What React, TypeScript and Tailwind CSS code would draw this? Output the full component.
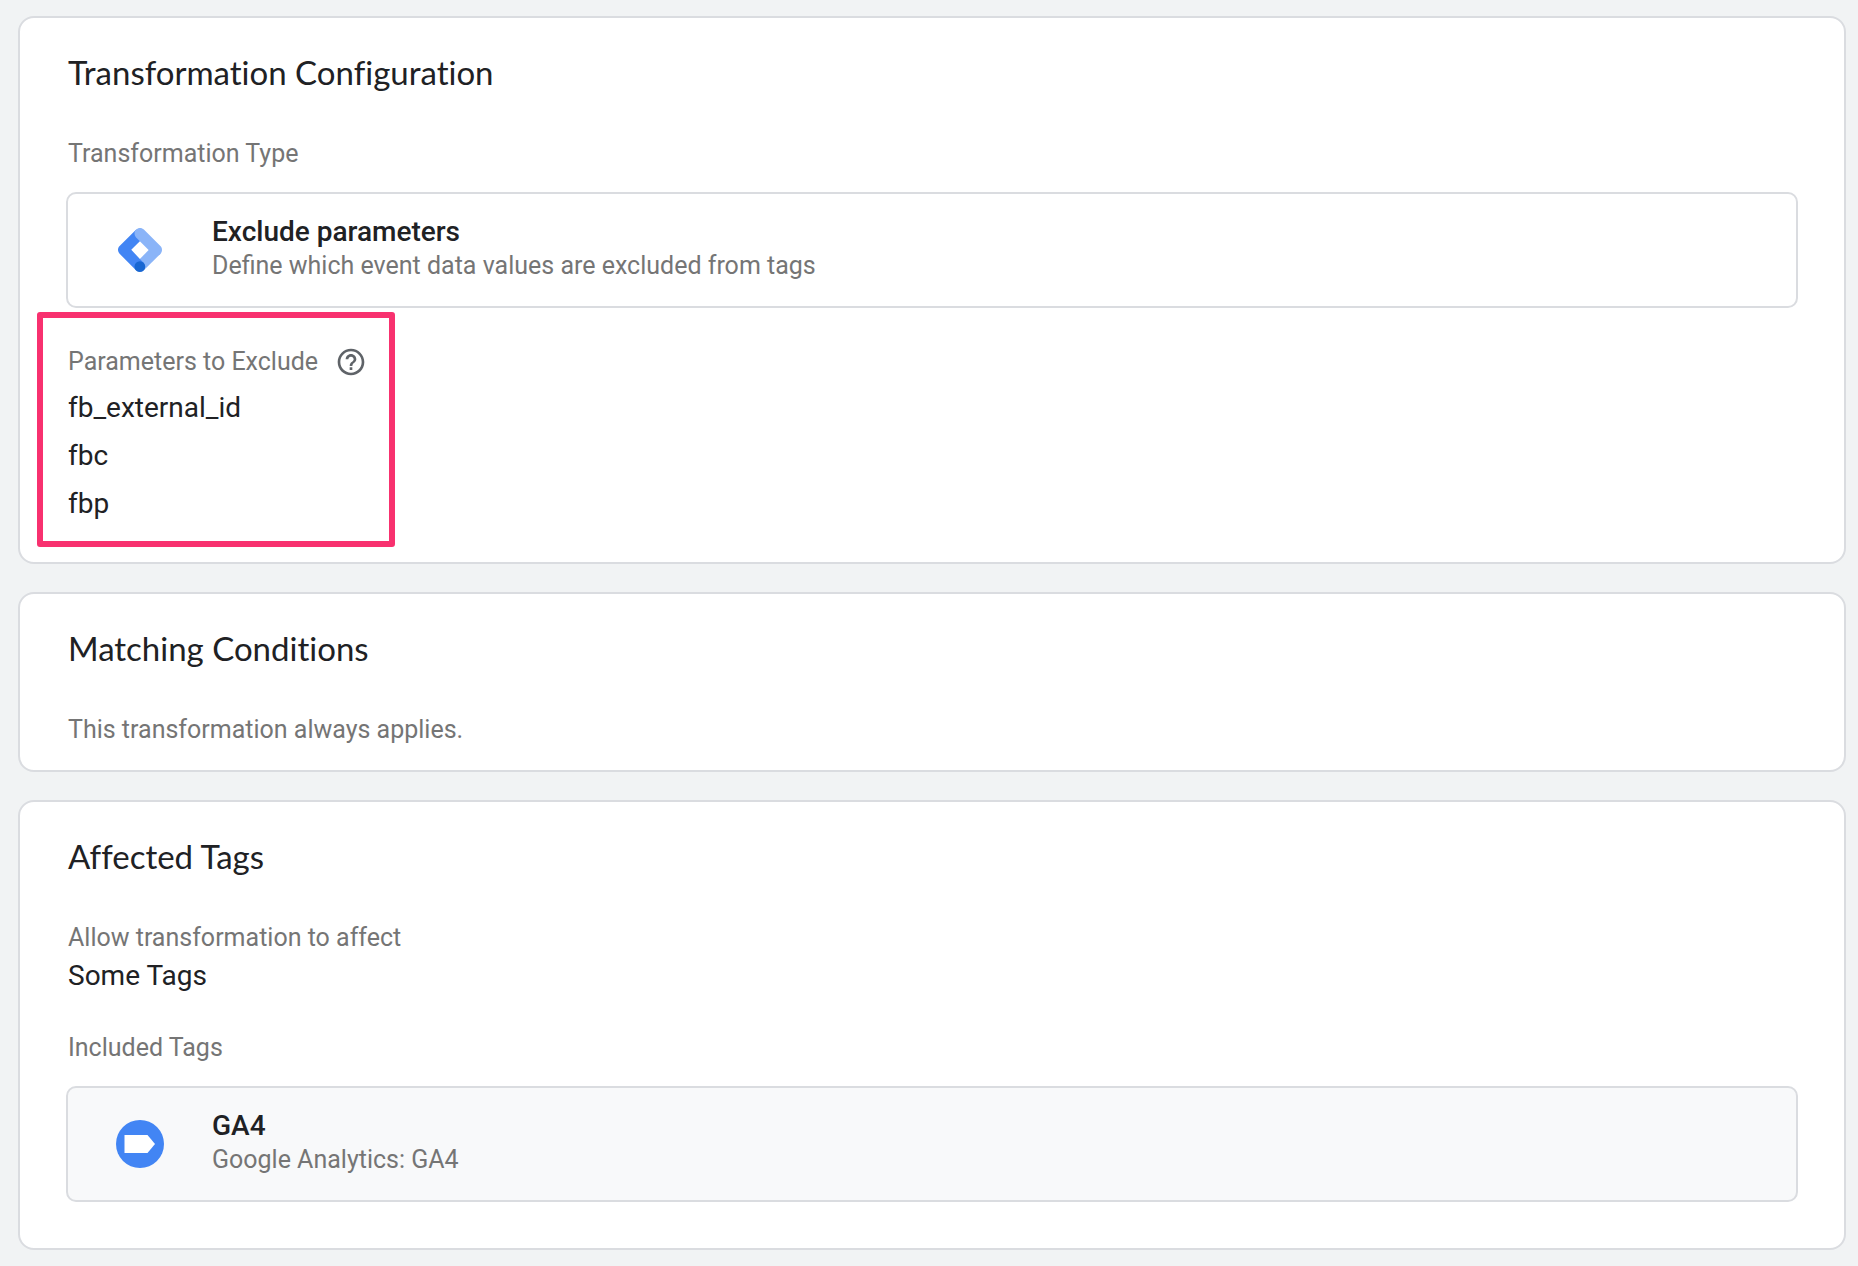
import type { ReactNode } from "react";
import { MdHelpOutline } from "react-icons/md";

const excludedParameters = ["fb_external_id", "fbc", "fbp"];

function TransformationIcon() {
  return (
    <svg viewBox="0 0 256 256" className="size-11" aria-hidden="true">
      <path fill="#8ab4f8" d="M150.26 245.52l-44.44-43.33 95.44-97.46 46 45.1z" />
      <path
        fill="#4285f4"
        d="M150.45 53.94L106.18 8.73 9.36 104.63c-12.48 12.48-12.48 32.71 0 45.2l95.36 95.99 45.09-42.18-72.65-76.41 73.29-73.29z"
      />
      <path
        fill="#8ab4f8"
        d="M246.63 105.37l-96-96c-12.5-12.5-32.76-12.5-45.25 0-12.5 12.49-12.5 32.75 0 45.25l96 96c12.49 12.49 32.75 12.49 45.25 0 12.49-12.5 12.49-32.76 0-45.25z"
      />
      <circle fill="#1967d2" cx="127.27" cy="224.73" r="31.27" />
    </svg>
  );
}

function TagIcon() {
  return (
    <svg viewBox="0 0 48 48" className="size-12" aria-hidden="true">
      <circle cx="24" cy="24" r="24" fill="#4285f4" />
      <path d="M8.5 15h23l7.5 9-7.5 9h-23z" fill="#fff" />
    </svg>
  );
}

function Card({ title, className, children }: { title: string; className: string; children: ReactNode }) {
  return (
    <section className={`rounded-2xl border-2 border-[#dadce0] bg-white px-[46px] pt-[34px] ${className}`}>
      <h2 className="mb-[46px] px-0.5 font-['Lato',sans-serif] text-[33px] leading-10 text-[#202124] [font-variant-ligatures:none]">
        {title}
      </h2>
      {children}
    </section>
  );
}

function Label({ children }: { children: ReactNode }) {
  return <p className="px-0.5 text-[25px] leading-8 text-[#757575]">{children}</p>;
}

function Row({ icon, title, text, className }: { icon: ReactNode; title: string; text: string; className: string }) {
  return (
    <div className={`mt-[22px] flex items-center gap-12 rounded-[10px] border-2 border-[#dadce0] px-12 ${className}`}>
      <div className="flex w-12 shrink-0 justify-center">{icon}</div>
      <div className="pt-5 pb-6">
        <h3 className="text-[28px] leading-9 font-medium text-[#202124]">{title}</h3>
        <p className="text-[25px] leading-8 text-[#757575]">{text}</p>
      </div>
    </div>
  );
}

export default function App() {
  return (
    <main className="flex min-h-screen flex-col gap-7 bg-[#f1f3f4] pt-4 pr-3 pb-4 pl-[18px] font-['Roboto',sans-serif]">
      <Card title="Transformation Configuration" className="pb-[34px]">
        <Label>Transformation Type</Label>
        <Row
          icon={<TransformationIcon />}
          title="Exclude parameters"
          text="Define which event data values are excluded from tags"
          className="bg-white"
        />

        <div className="relative pt-[38px]">
          {/* Highlight frame */}
          <div className="pointer-events-none absolute top-1 -bottom-[19px] -left-[29px] w-[358px] rounded-[3px] border-6 border-[#f8316f]" />
          <div className="flex items-center gap-[15px]">
            <Label>Parameters to Exclude</Label>
            <button type="button" aria-label="Help" className="text-[#5f6368]">
              <MdHelpOutline className="size-8" />
            </button>
          </div>
          <ul className="mt-1.5 px-0.5 text-[28px] leading-12 text-[#202124]">
            {excludedParameters.map((name) => (
              <li key={name}>{name}</li>
            ))}
          </ul>
        </div>
      </Card>

      <Card title="Matching Conditions" className="pb-6">
        <Label>This transformation always applies.</Label>
      </Card>

      <Card title="Affected Tags" className="pb-[46px]">
        <Label>Allow transformation to affect</Label>
        <p className="mt-0.5 mb-9 px-0.5 text-[28px] leading-10 text-[#202124]">Some Tags</p>
        <Label>Included Tags</Label>
        <Row icon={<TagIcon />} title="GA4" text="Google Analytics: GA4" className="bg-[#f8f9fa]" />
      </Card>
    </main>
  );
}
